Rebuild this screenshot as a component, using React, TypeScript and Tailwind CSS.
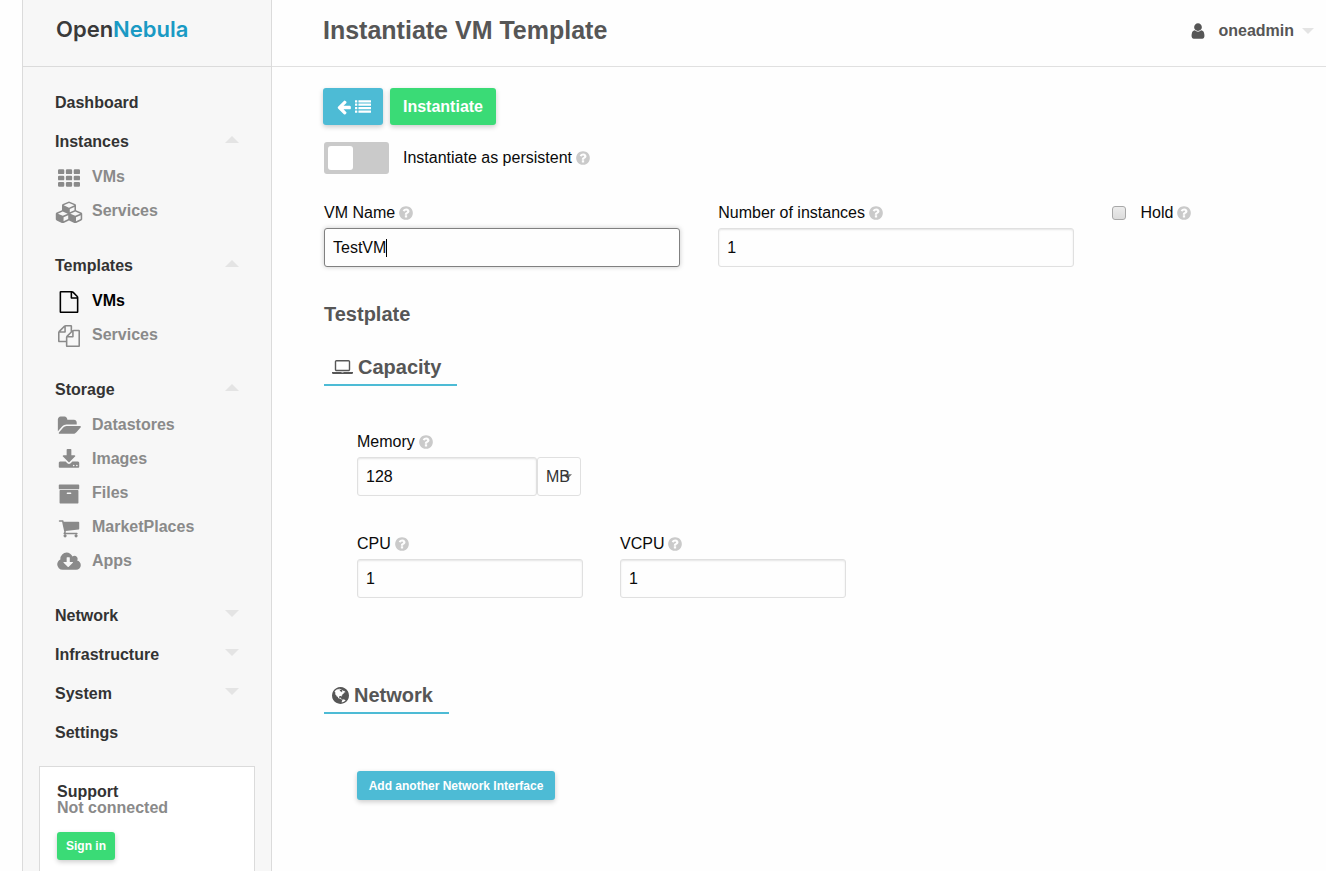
import { useEffect, useRef, useState, type ReactNode } from "react";

type IconProps = { d: string; box?: string; className?: string };

function Icon({ d, box = "0 0 1792 1792", className = "" }: IconProps) {
  return (
    <svg viewBox={box} className={"shrink-0 " + className} fill="currentColor" aria-hidden="true">
      <path d={d} />
    </svg>
  );
}

const block = (x: number, y: number, w: number, h: number, r: number) =>
  `M${x + r} ${y}h${w - 2 * r}q${r} 0 ${r} ${r}v${h - 2 * r}q0 ${r}-${r} ${r}h-${w - 2 * r}q-${r} 0-${r}-${r}v-${h - 2 * r}q0-${r} ${r}-${r}z`;

const TH = [256, 768, 1280].flatMap((y) => [0, 640, 1280].map((x) => block(x, y - 64, 512, 384, 96))).join("");
const LIST = [128, 512, 896, 1280].map((y) => block(0, y, 256, 256, 32) + block(384, y, 1408, 256, 32)).join("");
const CUBES =
  "M576 1665l384-192v-314l-384 164v342zm-64-454l404-173-404-173-404 173zm1088 454l384-192v-314l-384 164v342zm-64-454l404-173-404-173-404 173zm-448-293l384-165v-266l-384 164v267zm-64-379l441-189-441-189-441 189zm1088 518v416q0 36-19 67t-52 47l-448 224q-25 14-57 14t-57-14l-448-224q-5-2-7-4-2 2-7 4l-448 224q-25 14-57 14t-57-14l-448-224q-33-16-52-47t-19-67v-416q0-38 21.5-70t56.5-48l434-186v-400q0-38 21.5-70t56.5-48l448-192q23-10 50-10t50 10l448 192q35 16 56.5 48t21.5 70v400l434 186q36 16 57 48t21 70z";
const FILE =
  "M1596 380q28 28 48 76t20 88v1152q0 40-28 68t-68 28h-1344q-40 0-68-28t-28-68v-1600q0-40 28-68t68-28h896q40 0 88 20t76 48zm-444-244v376h376q-10-29-22-41l-313-313q-12-12-41-22zm384 1528v-1024h-416q-40 0-68-28t-28-68v-416h-768v1536h1280z";
const FILES =
  "M1696 384q40 0 68 28t28 68v1216q0 40-28 68t-68 28h-960q-40 0-68-28t-28-68v-288h-544q-40 0-68-28t-28-68v-672q0-40 20-88t48-76l408-408q28-28 76-48t88-20h416q40 0 68 28t28 68v328q68-40 128-40h416zm-544 213l-299 299h299v-299zm-640-384l-299 299h299v-299zm196 647l316-316v-416h-384v416q0 40-28 68t-68 28h-416v640h512v-256q0-40 20-88t48-76zm956 804v-1152h-384v416q0 40-28 68t-68 28h-416v640h896z";
const FOLDER =
  "M1943 952q0 31-31 66l-336 396q-43 51-120.5 86.5t-143.5 35.5h-1088q-34 0-60.5-13t-26.5-43q0-31 31-66l336-396q43-51 120.5-86.5t143.5-35.5h1088q34 0 60.5 13t26.5 43zm-343-344v160h-832q-94 0-197 47.5t-164 119.5l-337 396-5 6q0-4-.5-12.5t-.5-12.5v-960q0-92 66-158t158-66h320q92 0 158 66t66 158v32h544q92 0 158 66t66 158z";
const DOWNLOAD =
  "M1344 1344q0-26-19-45t-45-19-45 19-19 45 19 45 45 19 45-19 19-45zm256 0q0-26-19-45t-45-19-45 19-19 45 19 45 45 19 45-19 19-45zm128-224v320q0 40-28 68t-68 28h-1472q-40 0-68-28t-28-68v-320q0-40 28-68t68-28h465l135 136q58 56 136 56t136-56l136-136h464q40 0 68 28t28 68zm-325-569q17 41-14 70l-448 448q-18 19-45 19t-45-19l-448-448q-31-29-14-70 17-39 59-39h256v-448q0-26 19-45t45-19h256q26 0 45 19t19 45v448h256q42 0 59 39z";
const ARCHIVE =
  "M1088 832q0-26-19-45t-45-19h-256q-26 0-45 19t-19 45 19 45 45 19h256q26 0 45-19t19-45zm576-192v960q0 26-19 45t-45 19h-1408q-26 0-45-19t-19-45v-960q0-26 19-45t45-19h1408q26 0 45 19t19 45zm64-448v256q0 26-19 45t-45 19h-1536q-26 0-45-19t-19-45v-256q0-26 19-45t45-19h1536q26 0 45 19t19 45z";
const CART =
  "M704 1536q0 52-38 90t-90 38-90-38-38-90 38-90 90-38 90 38 38 90zm896 0q0 52-38 90t-90 38-90-38-38-90 38-90 90-38 90 38 38 90zm128-1088v512q0 24-16.5 42.5t-40.5 21.5l-1044 122q13 60 13 70 0 16-24 64h920q26 0 45 19t19 45-19 45-45 19h-1024q-26 0-45-19t-19-45q0-11 8-31.5t16-36 21.5-40 15.5-29.5l-177-823h-204q-26 0-45-19t-19-45 19-45 45-19h256q16 0 28.5 6.5t19.5 15.5 13 24.5 8 26 5.5 29.5 4.5 26h1201q26 0 45 19t19 45z";
const CLOUD =
  "M1216 928q0-14-9-23t-23-9h-224v-352q0-13-9.5-22.5t-22.5-9.5h-192q-13 0-22.5 9.5t-9.5 22.5v352h-224q-13 0-22.5 9.5t-9.5 22.5q0 14 9 23l352 352q9 9 23 9t23-9l351-351q10-12 10-24zm640 224q0 159-112.5 271.5t-271.5 112.5h-1088q-185 0-316.5-131.5t-131.5-316.5q0-130 70-240t188-165q-2-30-2-43 0-212 150-362t362-150q156 0 285.5 87t188.5 231q71-62 166-62 106 0 181 75t75 181q0 76-41 138 130 31 213.5 135.5t83.5 238.5z";
const USER =
  "M1536 1399q0 109-62.5 187t-150.5 78h-854q-88 0-150.5-78t-62.5-187q0-85 8.5-160.5t31.5-152 58.5-131 94-89 134.5-34.5q131 128 313 128t313-128q76 0 134.5 34.5t94 89 58.5 131 31.5 152 8.5 160.5zm-256-887q0 159-112.5 271.5t-271.5 112.5-271.5-112.5-112.5-271.5 112.5-271.5 271.5-112.5 271.5 112.5 112.5 271.5z";
const ARROW =
  "M1664 896v128q0 53-32.5 90.5t-84.5 37.5h-704l293 294q38 36 38 90t-38 90l-75 76q-37 37-90 37-52 0-91-37l-651-652q-37-37-37-90 0-52 37-91l651-650q38-38 91-38 52 0 90 38l75 74q38 38 38 91t-38 91l-293 293h704q52 0 84.5 37.5t32.5 90.5z";
const QUESTION =
  "M1024 1376v-192q0-14-9-23t-23-9h-192q-14 0-23 9t-9 23v192q0 14 9 23t23 9h192q14 0 23-9t9-23zm256-672q0-88-55.5-163t-138.5-116-170-41q-243 0-371 213-15 24 8 42l132 100q7 6 19 6 16 0 25-12 53-68 86-92 34-24 86-24 48 0 85.5 26t37.5 59q0 38-20 61t-68 45q-63 28-115.5 86.5t-52.5 125.5v36q0 14 9 23t23 9h192q14 0 23-9t9-23q0-19 21.5-49.5t54.5-49.5q32-18 49-28.5t46-35 44.5-48 28-60.5 12.5-81zm384 192q0 209-103 385.5t-279.5 279.5-385.5 103-385.5-103-279.5-279.5-103-385.5 103-385.5 279.5-279.5 385.5-103 385.5 103 279.5 279.5 103 385.5z";
const LAPTOP =
  "M416 1280q-66 0-113-47t-47-113v-704q0-66 47-113t113-47h1088q66 0 113 47t47 113v704q0 66-47 113t-113 47h-1088zm-32-864v704q0 13 9.5 22.5t22.5 9.5h1088q13 0 22.5-9.5t9.5-22.5v-704q0-13-9.5-22.5t-22.5-9.5h-1088q-13 0-22.5 9.5t-9.5 22.5zm1376 928h160v96q0 40-47 68t-113 28h-1600q-66 0-113-28t-47-68v-96h1760zm-720 96q16 0 16-16t-16-16h-160q-16 0-16 16t16 16h160z";
const GLOBE =
  "M896 128q209 0 385.5 103t279.5 279.5 103 385.5-103 385.5-279.5 279.5-385.5 103-385.5-103-279.5-279.5-103-385.5 103-385.5 279.5-279.5 385.5-103zm274 521q-2 1-9.5 9.5t-13.5 9.5q2 0 4.5-5t5-11 3.5-7q6-7 22-15 14-6 52-12 34-8 51 11-2-2 9.5-13t14.5-12q3-2 15-4.5t15-7.5l2-22q-12 1-17.5-7t-6.5-21q0 2-6 8 0-7-4.5-8t-11.5 1-9 1q-10-3-15-7.5t-8-16.5-4-15q-2-5-9.5-11t-9.5-10q-1-2-2.5-5.5t-3-6.5-4-5.5-5.5-2.5-7 5-7.5 10-4.5 5q-3-2-6-1.5t-4.5 1-4.5 3-5 3.5q-3 2-8.5 3t-8.5 2q15-5-1-11-10-4-16-3 9-4 7.5-12t-8.5-14h5q-1-4-8.5-8.5t-17.5-8.5-13-6q-8-5-34-9.5t-33-.5q-5 6-4.5 10.5t4 14 3.5 12.5q1 6-5.5 13t-6.5 12q0 7 14 15.5t10 21.5q-3 8-16 16t-16 12q-5 8-1.5 18.5t10.5 16.5q2 2 1.5 4t-3.5 4.5-5.5 4-6.5 3.5l-3 2q-11 5-20.5-6t-13.5-26q-7-25-16-30-23-8-29 1-5-13-41-26-25-9-58-4 6-1 0-15-7-15-19-12 3-6 4-17.5t1-13.5q3-13 12-23 1-1 7-8.5t9.5-13.5.5-6q35 4 50-11 5-5 11.5-17t10.5-17q9-6 14-5.5t14.5 5.5 14.5 5q14 1 15.5-11t-7.5-20q12 1 3-17-5-7-8-9-12-4-27 5-8 4 2 8-1-1-9.5 10.5t-16.5 17.5-16-5q-1-1-5.5-13.5t-9.5-13.5q-8 0-16 15 3-8-11-15t-24-8q19-12-8-27-7-4-20.5-5t-19.5 4q-5 7-5.5 11.5t5 8 10.5 5.5 11.5 4 8.5 3q14 10 8 14-2 1-8.5 3.5t-11.5 4.5-6 4q-3 4 0 14t-2 14q-5-5-9-17.5t-7-16.5q7 9-25 6l-10-1q-4 0-16 2t-20.5 1-13.5-8q-4-8 0-20 1-4 4-2-4-3-11-9.5t-10-8.5q-46 15-94 41 6 1 12-1 5-2 13-6.5t10-5.5q34-14 42-7l5-5q14 16 20 25-7-4-30-1-20 6-22 12 7 12 5 18-4-3-11.5-10t-14.5-11-15-5q-16 0-22 1-146 80-235 222 7 7 12 8 4 1 5 9t2.5 11 11.5-3q9 8 3 19 1-1 44 27 19 17 21 21 3 11-10 18-1-2-9-9t-9-4q-3 5 .5 18.5t10.5 12.5q-7 0-9.5 16t-2.5 35.5-1 23.5l2 1q-3 12 5.5 34.5t21.5 19.5q-13 3 20 43 6 8 8 9 3 2 12 7.5t15 10 10 10.5q4 5 10 22.5t14 23.5q-2 6 9.5 20t10.5 23q-1 0-2.5 1t-2.5 1q3 7 15.5 14t15.5 13q1 3 2 10t3 11 8 2q2-20-24-62-15-25-17-29-3-5-5.5-15.5t-4.5-14.5q2 0 6 1.5t8.5 3.5 7.5 4 2 3q-3 7 2 17.5t12 18.5 17 19 12 13q6 6 14 19.5t0 13.5q9 0 20 10t17 20q5 8 8 26t5 24q2 7 8.5 13.5t12.5 9.5l16 8 13 7q5 2 18.5 10.5t21.5 11.5q10 4 16 4t14.5-2.5 13.5-3.5q15-2 29 15t21 21q36 19 55 11-2 1 .5 7.5t8 15.5 9 14.5 5.5 8.5q5 6 18 15t18 15q6-4 7-9-3 8 7 20t18 10q14-3 14-32-31 15-49-18 0-1-2.5-5.5t-4-8.5-2.5-8.5 0-7.5 5-3q9 0 10-3.5t-2-12.5-4-13q-1-8-11-20t-12-15q-5 9-16 8t-16-9q0 1-1.5 5.5t-1.5 6.5q-13 0-15-1 1-3 2.5-17.5t3.5-22.5q1-4 5.5-12t7.5-14.5 4-12.5-4.5-9.5-17.5-2.5q-19 1-26 20-1 3-3 10.5t-5 11.5-9 7q-7 3-24 2t-24-5q-13-8-22.5-29t-9.5-37q0-10 2.5-26.5t3-25-5.5-24.5q3-2 9-9.5t10-10.5q2-1 4.5-1.5t4.5 0 4-1.5 3-6q-1-1-4-3-3-3-4-3 7 3 28.5-1.5t27.5 1.5q15 11 22-2 0-1-2.5-9.5t-.5-13.5q5 27 29 9 3 3 15.5 5t17.5 5q3 2 7 5.5t5.5 4.5 5-.5 8.5-6.5q10 14 12 24 11 40 19 44 7 3 11 2t4.5-9.5 0-14-1.5-12.5l-1-8v-18l-1-8q-15-3-18.5-12t1.5-18.5 15-18.5q1-1 8-3.5t15.5-6.5 12.5-8q21-19 15-35 7 0 11-9-1 0-5-3t-7.5-5-4.5-2q9-5 2-16 5-3 7.5-11t7.5-10q9 12 21 2 8-8 1-16 5-7 20.5-10.5t18.5-9.5q7 2 8-2t1-12 3-12q4-5 15-9t13-5l17-11q3-4 0-4 18 2 31-11 10-11-6-20 3-6-3-9.5t-15-5.5q3-1 11.5-.5t10.5-1.5q15-10-7-16-17-5-43 12zm-163 877q206-36 351-189-3-3-12.5-4.5t-12.5-3.5q-18-7-24-8 1-7-2.5-13t-8-9-12.5-8-11-7q-2-2-7-6t-7-5.5-7.5-4.5-8.5-2-10 1l-3 1q-3 1-5.5 2.5t-5.5 3-4 3 0 2.5q-21-17-36-22-5-1-11-5.5t-10.5-7-10-1.5-11.5 7q-5 5-6 15t-2 13q-7-5 0-17.5t2-18.5q-3-6-10.5-4.5t-12 4.5-11.5 8.5-9 6.5-8.5 5.5-8.5 7.5q-3 4-6 12t-5 11q-2-4-11.5-6.5t-9.5-5.5q2 10 4 35t5 38q7 31-12 48-27 25-29 40-4 22 12 26 0 7-8 20.5t-7 21.5q0 6 2 16z";

type Item = { label: string; d: string; box?: string; size: string; active?: boolean };
type Group = { label: string; items?: Item[]; caret?: "up" | "down" };

const groups: Group[] = [
  { label: "Dashboard" },
  {
    label: "Instances",
    caret: "up",
    items: [
      { label: "VMs", d: TH, size: "size-[22px]" },
      { label: "Services", d: CUBES, box: "-128 0 2304 1792", size: "h-[22px] w-[28px]" },
    ],
  },
  {
    label: "Templates",
    caret: "up",
    items: [
      { label: "VMs", d: FILE, size: "size-[22px]", active: true },
      { label: "Services", d: FILES, size: "size-[22px]" },
    ],
  },
  {
    label: "Storage",
    caret: "up",
    items: [
      { label: "Datastores", d: FOLDER, box: "0 0 1943 1792", size: "h-[22px] w-[24px]" },
      { label: "Images", d: DOWNLOAD, size: "size-[22px]" },
      { label: "Files", d: ARCHIVE, size: "size-[22px]" },
      { label: "MarketPlaces", d: CART, size: "size-[22px]" },
      { label: "Apps", d: CLOUD, box: "-64 0 1920 1792", size: "h-[22px] w-[24px]" },
    ],
  },
  { label: "Network", caret: "down" },
  { label: "Infrastructure", caret: "down" },
  { label: "System", caret: "down" },
  { label: "Settings" },
];

function Caret({ up = false, className }: { up?: boolean; className: string }) {
  return (
    <svg viewBox="0 0 14 7" className={"shrink-0 " + className} fill="currentColor" aria-hidden="true">
      <path d={up ? "M0 7L7 0L14 7z" : "M0 0H14L7 7z"} />
    </svg>
  );
}

function Label({ htmlFor, children }: { htmlFor: string; children: ReactNode }) {
  return (
    <label htmlFor={htmlFor} className="flex h-[30px] items-center gap-[3px] text-base text-[#0a0a0a]">
      {children}
      <Icon d={QUESTION} className="size-4 text-[#cacaca]" />
    </label>
  );
}

const field =
  "h-[39px] w-full rounded-[3px] border border-[#e0e0e0] bg-[#fefefe] px-2 text-base text-[#0a0a0a] shadow-[inset_0_1px_2px_rgba(10,10,10,0.1)] outline-none focus:border-[#808080] focus:shadow-[0_0_5px_#cacaca]";

function Field({ id, label, value }: { id: string; label: string; value: string }) {
  return (
    <div>
      <Label htmlFor={id}>{label}</Label>
      <input id={id} type="text" defaultValue={value} className={field} />
    </div>
  );
}

function SectionTitle({ children }: { children: ReactNode }) {
  return (
    <h3 className="flex h-[38px] w-fit items-center gap-[5px] border-b-2 border-[#4dbbd5] pt-0.5 pr-4 pl-2 text-xl font-bold text-[#565656]">
      {children}
    </h3>
  );
}

export default function App() {
  const nameRef = useRef<HTMLInputElement>(null);
  const [persistent, setPersistent] = useState(false);
  const [name, setName] = useState("TestVM");
  const [editing, setEditing] = useState(true);

  useEffect(() => {
    const input = nameRef.current;
    if (input) {
      input.focus();
      input.setSelectionRange(input.value.length, input.value.length);
    }
  }, []);

  return (
    <div className="flex h-screen overflow-hidden bg-[#fefefe] pl-[22px] font-['Liberation_Sans',Arial,sans-serif]">
      <aside className="flex w-[250px] shrink-0 flex-col border-x border-[#dbdbdb] bg-[#f7f7f7]">
        <div className="flex h-[67px] shrink-0 items-center border-b border-[#dbdbdb] pb-2 pl-[33px]">
          <a href="#home" className="font-['Inter',sans-serif] text-[22px] leading-6 font-semibold text-[#3a3a3a]">
            Open<span className="text-[#1a9ac4]">Nebula</span>
          </a>
        </div>
        <nav className="pt-4 pr-8 pl-8">
          {groups.map((g) => (
            <div key={g.label}>
              <a href={"#" + g.label} className="flex h-[39px] items-center justify-between text-base font-bold text-[#333]">
                {g.label}
                {g.caret && <Caret up={g.caret === "up"} className="mb-1 h-[7px] w-[14px] text-[#e4e4e4]" />}
              </a>
              {g.items && (
                <ul className="-mt-px mb-[18px]">
                  {g.items.map((it) => (
                    <li key={it.label}>
                      <a
                        href={"#" + g.label + it.label}
                        className={
                          "flex h-[34px] items-center gap-[9px] text-base font-bold " +
                          (it.active ? "text-black" : "text-[#8a8a8a]")
                        }
                      >
                        <span className="flex w-7 justify-center pt-0.5">
                          <Icon d={it.d} box={it.box} className={it.size} />
                        </span>
                        {it.label}
                      </a>
                    </li>
                  ))}
                </ul>
              )}
            </div>
          ))}
        </nav>
        <section className="mx-4 mt-[14px] h-32 shrink-0 border border-[#dbdbdb] bg-white px-[17px] pt-[17px]">
          <h2 className="text-base leading-4 font-bold text-[#333]">Support</h2>
          <p className="text-base leading-4 font-bold text-[#8a8a8a]">Not connected</p>
          <button className="mt-4 h-7 rounded-[3px] bg-[#3adb76] px-[9px] text-xs font-bold text-white shadow-[0_2px_5px_rgba(0,0,0,0.2)]">
            Sign in
          </button>
        </section>
      </aside>

      <div className="flex min-w-0 flex-1 flex-col">
        <header className="flex h-[67px] shrink-0 items-center justify-between border-b border-[#e0e0e0] pr-3 pb-[5px] pl-[51px] text-[#565656]">
          <h1 className="text-[25px] font-bold">Instantiate VM Template</h1>
          <button className="flex items-center text-base font-bold">
            <Icon d={USER} className="mr-[11px] size-[18px]" />
            oneadmin
            <Caret className="ml-2 h-[6px] w-[12px] text-[#e4e4e4]" />
          </button>
        </header>

        <main className="pt-[21px] pr-5 pl-[52px]">
          <div className="-ml-px flex gap-[7px]">
            <button
              aria-label="Back to list"
              className="flex h-[37px] w-[60px] items-center justify-center gap-[3px] rounded-[3px] bg-[#4dbbd5] text-white shadow-[0_2px_5px_rgba(0,0,0,0.2)]"
            >
              <Icon d={ARROW} className="size-4" />
              <Icon d={LIST} className="size-4" />
            </button>
            <button className="h-[37px] rounded-[3px] bg-[#3adb76] px-[13px] text-base font-bold text-white shadow-[0_2px_5px_rgba(0,0,0,0.2)]">
              Instantiate
            </button>
          </div>

          <div className="mt-[17px] flex h-8 items-center gap-[14px]">
            <input
              id="persistent"
              type="checkbox"
              role="switch"
              checked={persistent}
              onChange={(e) => setPersistent(e.target.checked)}
              className="h-8 w-[65px] appearance-none rounded-[3px] bg-[#cacaca] p-1 before:block before:h-6 before:w-[25px] before:rounded-[3px] before:bg-white checked:bg-[#4dbbd5] checked:before:ml-8"
            />
            <Label htmlFor="persistent">Instantiate as persistent</Label>
          </div>

          <div className="mt-6 grid grid-cols-[357fr_357fr_194fr] gap-[38px]">
            <div>
              <Label htmlFor="name">VM Name</Label>
              <div className="relative">
                <input
                  id="name"
                  ref={nameRef}
                  type="text"
                  value={name}
                  onChange={(e) => setName(e.target.value)}
                  onFocus={() => setEditing(true)}
                  onBlur={() => setEditing(false)}
                  className={field + " caret-transparent"}
                />
                {editing && (
                  <div className="pointer-events-none absolute inset-0 flex items-center pl-[9px]" aria-hidden="true">
                    <span className="invisible whitespace-pre">{name}</span>
                    <span className="h-[18px] w-px bg-black" />
                  </div>
                )}
              </div>
            </div>
            <Field id="instances" label="Number of instances" value="1" />
            <div className="flex h-[30px] items-center gap-[14px]">
              <input
                id="hold"
                type="checkbox"
                className="size-[14px] appearance-none rounded-[3px] border border-[#a8a8a8] bg-linear-to-b from-[#ececec] to-[#dcdcdc] checked:bg-[#4dbbd5]"
              />
              <Label htmlFor="hold">Hold</Label>
            </div>
          </div>

          <h2 className="mt-8 text-xl leading-[30px] font-bold text-[#565656]">Testplate</h2>

          <div className="mt-[19px]">
            <SectionTitle>
              <Icon d={LAPTOP} box="0 0 1920 1792" className="h-5 w-[21px]" />
              Capacity
            </SectionTitle>
          </div>
          <div className="mt-[41px] pl-[33px]">
            <Label htmlFor="memory">Memory</Label>
            <div className="flex">
              <div className="w-[180px]">
                <input id="memory" type="text" defaultValue="128" className={field} />
              </div>
              <div className="relative">
                <select
                  aria-label="Memory unit"
                  className="h-[39px] w-11 appearance-none rounded-[3px] border border-[#e0e0e0] bg-[#fefefe] pl-2 text-base text-[#333]"
                >
                  <option>MB</option>
                  <option>GB</option>
                </select>
                <Caret className="pointer-events-none absolute top-4 right-[9px] h-[7px] w-[9px] text-[#333]/70" />
              </div>
            </div>
            <div className="mt-[33px] flex gap-[37px]">
              <div className="w-[226px]">
                <Field id="cpu" label="CPU" value="1" />
              </div>
              <div className="w-[226px]">
                <Field id="vcpu" label="VCPU" value="1" />
              </div>
            </div>
          </div>

          <div className="mt-[78px]">
            <SectionTitle>
              <Icon d={GLOBE} box="128 128 1536 1536" className="size-[17px]" />
              Network
            </SectionTitle>
          </div>
          <div className="mt-[57px] pl-[33px]">
            <button className="h-[29px] w-[198px] rounded-[3px] bg-[#4dbbd5] text-xs font-bold text-white shadow-[0_2px_5px_rgba(0,0,0,0.2)]">
              Add another Network Interface
            </button>
          </div>
        </main>
      </div>
    </div>
  );
}
